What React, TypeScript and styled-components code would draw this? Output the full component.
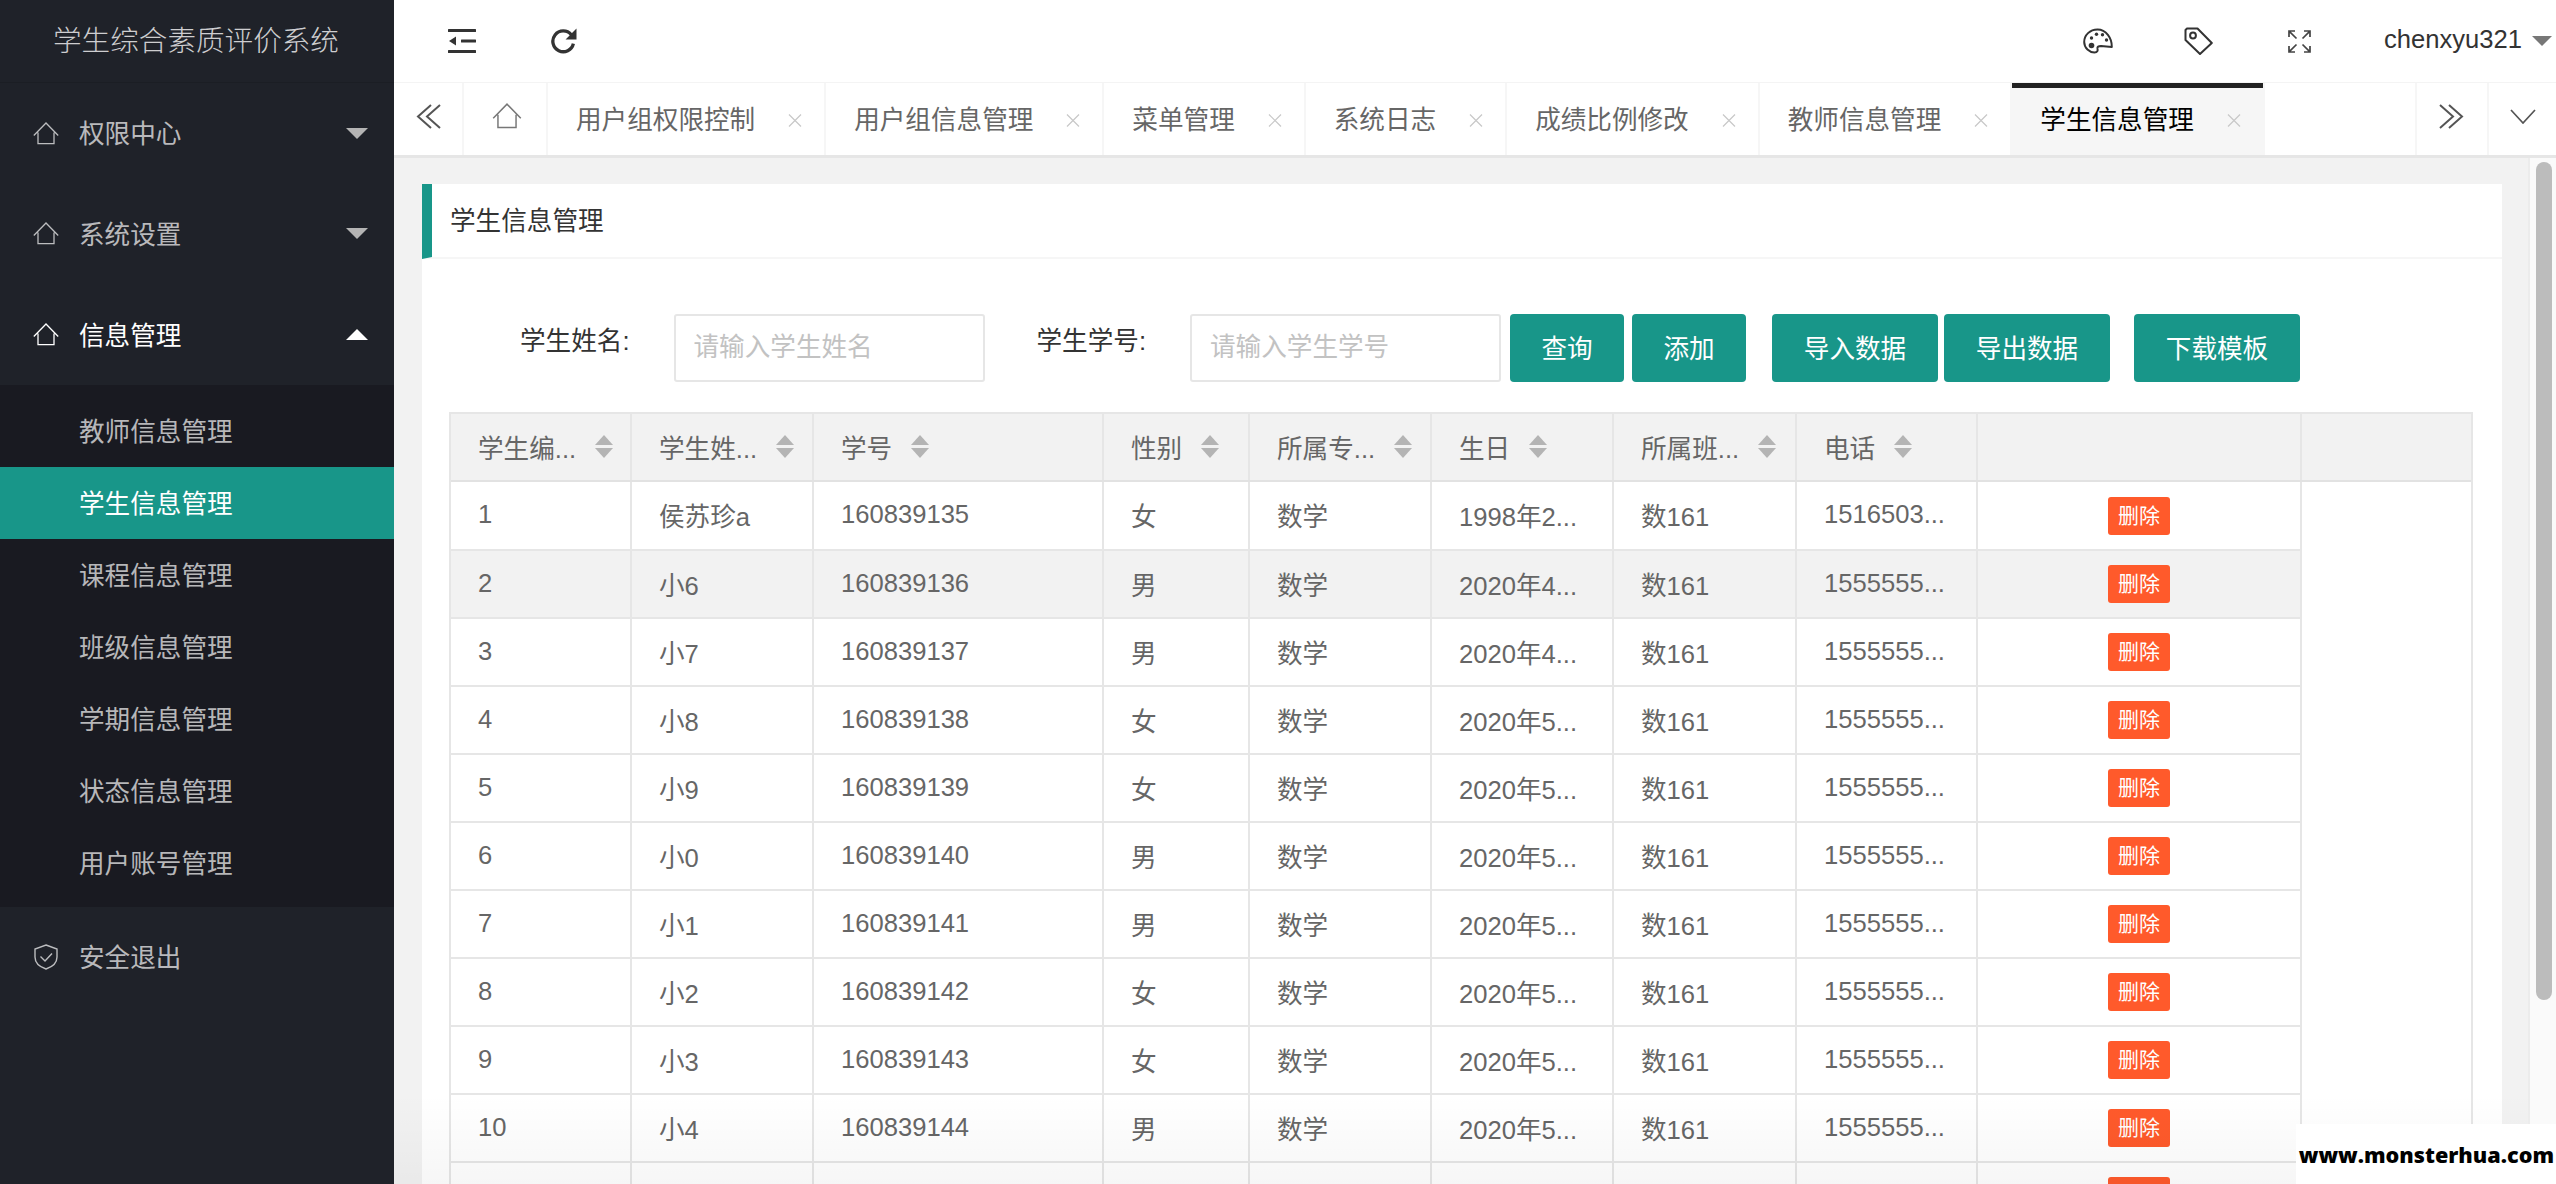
import React from "react";
import styled, { createGlobalStyle } from "styled-components";

const GlobalStyle = createGlobalStyle`
  html, body { margin: 0; padding: 0; height: 100%; overflow: hidden; }
  #root { height: 100%; }
  * { box-sizing: border-box; }
  body { font-family: "Liberation Sans", "Noto Sans CJK SC", sans-serif; font-size: 25.6px; color: #666; }
`;

const Page = styled.div`
  display: grid;
  grid-template-columns: 394px 1fr;
  height: 1184px;
  width: 2556px;
  overflow: hidden;
  position: relative;
`;

const Sidebar = styled.aside`
  background: #1f2229;
  display: flex;
  flex-direction: column;
  color: rgba(255, 255, 255, 0.7);
`;

const Logo = styled.div`
  height: 83px;
  display: flex;
  align-items: center;
  justify-content: center;
  font-size: 28.6px;
  font-weight: 300;
  color: rgba(255, 255, 255, 0.78);
  padding-bottom: 6px;
  padding-right: 2px;
  border-bottom: 1px solid #1b1e24;
`;

const NavItem = styled.div<{ $active?: boolean }>`
  height: 100.67px;
  display: flex;
  align-items: center;
  padding-left: 33px;
  padding-right: 26px;
  gap: 20px;
  color: ${(p) => (p.$active ? "#fff" : "rgba(255,255,255,0.7)")};
`;

const NavLabel = styled.span`
  flex: 1;
  margin-top: -3px;
`;

const Caret = styled.span<{ $up?: boolean; $color: string; $size: number; $height: number }>`
  width: 0;
  height: 0;
  border-left: ${(p) => p.$size}px solid transparent;
  border-right: ${(p) => p.$size}px solid transparent;
  ${(p) => (p.$up ? "border-bottom" : "border-top")}: ${(p) => p.$height}px solid ${(p) => p.$color};
`;

const SubMenu = styled.div`
  background: #191a21;
  padding: 10px 0 8px;
`;

const SubItem = styled.div<{ $active?: boolean }>`
  height: 72px;
  display: flex;
  align-items: center;
  padding-left: 79px;
  padding-bottom: 2px;
  background: ${(p) => (p.$active ? "#189689" : "transparent")};
  color: ${(p) => (p.$active ? "#fff" : "rgba(255,255,255,0.7)")};
`;

const Main = styled.main`
  display: flex;
  flex-direction: column;
  min-width: 0;
  background: #f2f2f2;
  position: relative;
  overflow: hidden;
`;

const TopBar = styled.header`
  height: 83px;
  background: #fff;
  display: flex;
  align-items: center;
  padding-right: 4px;
  border-bottom: 1px solid #f4f4f4;
  flex: none;
`;

const TopIcon = styled.span<{ $ml: number }>`
  display: flex;
  margin-left: ${(p) => p.$ml}px;
  color: #333;
`;

const Spacer = styled.div`
  flex: 1;
`;

const UserName = styled.span`
  margin-left: 73px;
  color: #333;
  font-size: 25.6px;
  margin-right: 10px;
  margin-top: -4px;
`;

const TabBar = styled.nav`
  height: 75px;
  flex: none;
  background: #fff;
  display: flex;
  border-bottom: 3px solid #e6e6e6;
`;

const TabEdge = styled.div<{ $w: number }>`
  width: ${(p) => p.$w}px;
  flex: none;
  display: flex;
  align-items: center;
  justify-content: center;
  border-right: 2px solid #f6f6f6;
  color: #666;
  padding-bottom: 6px;
`;

const TabHome = styled(TabEdge)`
  padding-left: 3px;
`;

const TabEdgeRight = styled(TabEdge)`
  border-right: none;
  border-left: 2px solid #f6f6f6;
`;

const TabStrip = styled.div`
  flex: 1;
  display: flex;
  min-width: 0;
`;

const Tab = styled.div<{ $active?: boolean }>`
  flex: none;
  display: flex;
  align-items: center;
  padding: 0 22px 4px 28px;
  gap: 33px;
  white-space: nowrap;
  border-right: 2px solid #f6f6f6;
  color: ${(p) => (p.$active ? "#000" : "#666")};
  background: ${(p) => (p.$active ? "#f6f6f6" : "transparent")};
  box-shadow: ${(p) => (p.$active ? "inset 0 5px 0 #222" : "none")};
  svg {
    margin-top: 6px;
  }
`;

const Content = styled.div`
  flex: 1;
  min-height: 0;
  overflow: hidden;
  padding: 26px 54px 0 28px;
  position: relative;
`;

const Card = styled.section`
  background: #fff;
`;

const CardHeader = styled.div`
  height: 75px;
  display: flex;
  align-items: center;
  padding-left: 18px;
  padding-bottom: 4px;
  border-left: 10px solid #189689;
  border-bottom: 2px solid #f6f6f6;
  color: #333;
`;

const CardBody = styled.div`
  padding: 55px 29px 0 27px;
`;

const Toolbar = styled.form`
  display: flex;
  align-items: flex-start;
  padding-left: 71px;
  height: 98px;
`;

const FieldLabel = styled.label<{ $mr: number }>`
  line-height: 54px;
  color: #333;
  margin-right: ${(p) => p.$mr}px;
  white-space: nowrap;
`;

const TextInput = styled.input<{ $mr: number }>`
  width: 311px;
  height: 68px;
  border: 2px solid #e6e6e6;
  border-radius: 3px;
  padding: 0 18px 2px;
  margin-right: ${(p) => p.$mr}px;
  font: inherit;
  outline: none;
  &::placeholder {
    color: #c2c2c2;
  }
`;

const ActionButton = styled.button<{ $ml?: number; $wide?: boolean }>`
  height: 68px;
  width: ${(p) => (p.$wide ? 166 : 114)}px;
  margin-left: ${(p) => p.$ml ?? 0}px;
  background: #189689;
  border: none;
  border-radius: 4px;
  color: #fff;
  font: inherit;
  padding: 0 0 4px;
`;

const TableBox = styled.div`
  border: solid #e6e6e6;
  border-width: 2px 2px 0 2px;
  width: 2024px;
`;

const HeadTable = styled.table`
  border-collapse: collapse;
  table-layout: fixed;
  width: 2020px;
  background: #f2f2f2;
`;

const BodyTable = styled.table`
  border-collapse: collapse;
  table-layout: fixed;
  width: 1850px;
`;

const HeadCell = styled.th`
  height: 67px;
  padding: 0 0 2px 27px;
  border-right: 2px solid #e6e6e6;
  border-bottom: 2px solid #e2e2e2;
  font-weight: 400;
  color: #666;
  text-align: left;
  white-space: nowrap;
  overflow: hidden;
  &:last-child {
    border-right: none;
  }
`;

const HeadInner = styled.div`
  display: flex;
  align-items: center;
  gap: 19px;
`;

const SortIcon = styled.span`
  display: inline-flex;
  flex-direction: column;
  gap: 3px;
  &::before,
  &::after {
    content: "";
    width: 0;
    height: 0;
    border-left: 9px solid transparent;
    border-right: 9px solid transparent;
  }
  &::before {
    border-bottom: 10px solid #b4b4b4;
  }
  &::after {
    border-top: 10px solid #b4b4b4;
  }
`;

const Row = styled.tr<{ $shade?: string }>`
  background: ${(p) => p.$shade ?? "#fff"};
`;

const Cell = styled.td`
  height: 68px;
  padding: 0 0 2px 27px;
  border-right: 2px solid #e6e6e6;
  border-bottom: 2px solid #e6e6e6;
  color: #666;
  white-space: nowrap;
  overflow: hidden;
`;

const ActionCell = styled(Cell)`
  padding: 0;
  text-align: center;
`;

const DeleteButton = styled.button`
  width: 62px;
  height: 38px;
  padding: 0;
  border: none;
  border-radius: 3px;
  background: #ff5a2b;
  color: #fff;
  font-family: inherit;
  font-size: 21px;
  line-height: 38px;
  vertical-align: middle;
`;

const Scrollbar = styled.div`
  position: absolute;
  top: 158px;
  right: 0;
  bottom: 0;
  width: 28px;
  background: #fafafa;
  border-left: 2px solid #ececec;
`;

const Thumb = styled.div`
  position: absolute;
  top: 4px;
  left: 6px;
  width: 16px;
  height: 838px;
  border-radius: 8px;
  background: #bcbcbc;
`;

const BottomFade = styled.div`
  position: absolute;
  left: 0;
  right: 0;
  bottom: 0;
  height: 90px;
  pointer-events: none;
  background: linear-gradient(to bottom, rgba(0, 0, 0, 0), rgba(0, 0, 0, 0.035));
`;

const Watermark = styled.div`
  position: absolute;
  right: 0;
  bottom: 0;
  width: 260px;
  height: 60px;
  background: #fff;
  color: #000;
  font-family: "Open Sans", "Noto Sans", sans-serif;
  font-weight: 800;
  font-size: 21.6px;
  display: flex;
  align-items: center;
  justify-content: flex-end;
  padding-right: 2px;
  white-space: nowrap;
`;

const HomeIcon = ({ w = 26, h = 23, c = "currentColor" }: { w?: number; h?: number; c?: string }) => (
  <svg width={w} height={h} viewBox="0 0 26 23" fill="none" stroke={c} strokeWidth="1.3">
    <path d="M0.8 13.5 13 1 25.2 13.5M5 10.5V21.7H21V10.5" />
  </svg>
);

const ShieldIcon = () => (
  <svg width="26" height="26" viewBox="0 0 26 26" fill="none" stroke="currentColor" strokeWidth="1.4">
    <path d="M13 1 24 5V13C24 19 19 23 13 25 7 23 2 19 2 13V5Z" />
    <path d="M7.5 12.5 12 17 19 9.5" />
  </svg>
);

const CloseIcon = () => (
  <svg width="14" height="13" viewBox="0 0 14 13" fill="none" stroke="#c8c8c8" strokeWidth="1.2">
    <path d="M1 0.5 13 12.5M13 0.5 1 12.5" />
  </svg>
);

const DoubleLeft = () => (
  <svg width="26" height="25" viewBox="0 0 26 25" fill="none" stroke="#555" strokeWidth="2">
    <path d="M16 1 3 12.5 16 24M25 1 12 12.5 25 24" />
  </svg>
);

const DoubleRight = () => (
  <svg width="26" height="25" viewBox="0 0 26 25" fill="none" stroke="#555" strokeWidth="2">
    <path d="M1 1 14 12.5 1 24M10 1 23 12.5 10 24" />
  </svg>
);

const ChevronDown = () => (
  <svg width="26" height="15" viewBox="0 0 26 15" fill="none" stroke="#555" strokeWidth="1.7">
    <path d="M1 1 13 14 25 1" />
  </svg>
);

const OutdentIcon = () => (
  <svg width="28" height="24" viewBox="0 0 28 24" fill="#333">
    <rect x="0" y="0" width="28" height="3" rx="0.5" />
    <rect x="0" y="21" width="28" height="3" rx="0.5" />
    <rect x="13" y="10.5" width="15" height="3" rx="0.5" />
    <path d="M1 12 8 7.5V16.5Z" />
  </svg>
);

const RefreshIcon = () => (
  <svg width="27" height="26" viewBox="0 0 26 25" fill="none">
    <path d="M20.5 6.5A10 10 0 1 0 22.5 15" stroke="#333" strokeWidth="3.2" />
    <path d="M25.5 0.5V11H15Z" fill="#333" />
  </svg>
);

const PaletteIcon = () => (
  <svg width="30" height="26" viewBox="0 0 30 26" fill="none" stroke="#333" strokeWidth="2">
    <path d="M14.5 1.5C7 1.5 1.2 7 1.2 14 1.2 20 6.5 24.5 11.5 24.5 14.5 24.5 15 22.5 14.5 20.8 14 18.8 15.5 18 18 18L28.8 19C29 10 23 1.5 14.5 1.5Z" strokeLinejoin="round" />
    <g fill="#333" stroke="none">
      <circle cx="8.5" cy="10" r="1.7" />
      <circle cx="13.5" cy="6.2" r="1.7" />
      <circle cx="19.5" cy="6.8" r="1.7" />
      <circle cx="23.5" cy="12" r="1.7" />
      <circle cx="8.5" cy="17.5" r="2.8" />
    </g>
  </svg>
);

const TagIcon = () => (
  <svg width="29" height="28" viewBox="0 0 29 28" fill="none" stroke="#333" strokeWidth="2" strokeLinejoin="round">
    <path d="M3 1.5 13.5 1.5 27.8 16 16 27 1.5 13 1.5 3Z" />
    <circle cx="9" cy="8.5" r="2.9" />
  </svg>
);

const FullscreenIcon = () => (
  <svg width="23" height="23" viewBox="0 0 23 23" fill="none" stroke="#444" strokeWidth="1.7">
    <path d="M1 7V1H7M1.3 1.3 8.5 8.5" />
    <path d="M22 7V1H16M21.7 1.3 14.5 8.5" />
    <path d="M1 16V22H7M1.3 21.7 8.5 14.5" />
    <path d="M22 16V22H16M21.7 21.7 14.5 14.5" />
  </svg>
);

const subItems = ["教师信息管理", "学生信息管理", "课程信息管理", "班级信息管理", "学期信息管理", "状态信息管理", "用户账号管理"];
const tabs = ["用户组权限控制", "用户组信息管理", "菜单管理", "系统日志", "成绩比例修改", "教师信息管理", "学生信息管理"];
const colWidths = [180, 182, 290, 146, 182, 182, 183, 181, 324, 170];
const headers: [string, boolean][] = [
  ["学生编...", true],
  ["学生姓...", true],
  ["学号", true],
  ["性别", true],
  ["所属专...", true],
  ["生日", true],
  ["所属班...", true],
  ["电话", true],
  ["", false],
  ["", false],
];

const rows: string[][] = [
  ["1", "侯苏珍a", "160839135", "女", "1998年2...", "1516503..."],
  ["2", "小6", "160839136", "男", "2020年4...", "1555555..."],
  ["3", "小7", "160839137", "男", "2020年4...", "1555555..."],
  ["4", "小8", "160839138", "女", "2020年5...", "1555555..."],
  ["5", "小9", "160839139", "女", "2020年5...", "1555555..."],
  ["6", "小0", "160839140", "男", "2020年5...", "1555555..."],
  ["7", "小1", "160839141", "男", "2020年5...", "1555555..."],
  ["8", "小2", "160839142", "女", "2020年5...", "1555555..."],
  ["9", "小3", "160839143", "女", "2020年5...", "1555555..."],
  ["10", "小4", "160839144", "男", "2020年5...", "1555555..."],
  ["11", "小5", "160839145", "女", "2020年5...", "1555555..."],
];

const ColGroup = ({ widths }: { widths: number[] }) => (
  <colgroup>
    {widths.map((w, i) => (
      <col key={i} width={w} />
    ))}
  </colgroup>
);

export default function App() {
  return (
    <>
      <GlobalStyle />
      <Page>
        <Sidebar>
          <Logo>学生综合素质评价系统</Logo>
          <NavItem>
            <HomeIcon />
            <NavLabel>权限中心</NavLabel>
            <Caret $color="#b4b4b4" $size={11} $height={11} />
          </NavItem>
          <NavItem>
            <HomeIcon />
            <NavLabel>系统设置</NavLabel>
            <Caret $color="#b4b4b4" $size={11} $height={11} />
          </NavItem>
          <NavItem $active>
            <HomeIcon />
            <NavLabel>信息管理</NavLabel>
            <Caret $up $color="#fff" $size={11} $height={11} />
          </NavItem>
          <SubMenu>
            {subItems.map((s, i) => (
              <SubItem key={s} $active={i === 1}>
                {s}
              </SubItem>
            ))}
          </SubMenu>
          <NavItem>
            <ShieldIcon />
            <NavLabel>安全退出</NavLabel>
          </NavItem>
        </Sidebar>
        <Main>
          <TopBar>
            <TopIcon $ml={54}>
              <OutdentIcon />
            </TopIcon>
            <TopIcon $ml={74}>
              <RefreshIcon />
            </TopIcon>
            <Spacer />
            <TopIcon $ml={0}>
              <PaletteIcon />
            </TopIcon>
            <TopIcon $ml={71}>
              <TagIcon />
            </TopIcon>
            <TopIcon $ml={75}>
              <FullscreenIcon />
            </TopIcon>
            <UserName>chenxyu321</UserName>
            <Caret $color="#777" $size={10} $height={10} />
          </TopBar>
          <TabBar>
            <TabEdge $w={70}>
              <DoubleLeft />
            </TabEdge>
            <TabHome $w={84}>
              <HomeIcon w={30} h={26} c="#777" />
            </TabHome>
            <TabStrip>
              {tabs.map((t, i) => (
                <Tab key={t} $active={i === tabs.length - 1}>
                  {t}
                  <CloseIcon />
                </Tab>
              ))}
            </TabStrip>
            <TabEdgeRight $w={72}>
              <DoubleRight />
            </TabEdgeRight>
            <TabEdgeRight $w={69}>
              <ChevronDown />
            </TabEdgeRight>
          </TabBar>
          <Content>
            <Card>
              <CardHeader>学生信息管理</CardHeader>
              <CardBody>
                <Toolbar>
                  <FieldLabel $mr={44}>学生姓名:</FieldLabel>
                  <TextInput $mr={52} placeholder="请输入学生姓名" />
                  <FieldLabel $mr={44}>学生学号:</FieldLabel>
                  <TextInput $mr={9} placeholder="请输入学生学号" />
                  <ActionButton type="button">查询</ActionButton>
                  <ActionButton type="button" $ml={8}>添加</ActionButton>
                  <ActionButton type="button" $wide $ml={26}>导入数据</ActionButton>
                  <ActionButton type="button" $wide $ml={6}>导出数据</ActionButton>
                  <ActionButton type="button" $wide $ml={24}>下载模板</ActionButton>
                </Toolbar>
                <TableBox>
                  <HeadTable>
                    <ColGroup widths={colWidths} />
                    <thead>
                      <tr>
                        {headers.map(([h, sort], i) => (
                          <HeadCell key={i}>
                            <HeadInner>
                              {h}
                              {sort && <SortIcon />}
                            </HeadInner>
                          </HeadCell>
                        ))}
                      </tr>
                    </thead>
                  </HeadTable>
                  <BodyTable>
                    <ColGroup widths={colWidths.slice(0, 9)} />
                    <tbody>
                      {rows.map((r, i) => (
                        <Row key={r[0]} $shade={i === 1 ? "#f2f2f2" : undefined}>
                          <Cell>{r[0]}</Cell>
                          <Cell>{r[1]}</Cell>
                          <Cell>{r[2]}</Cell>
                          <Cell>{r[3]}</Cell>
                          <Cell>数学</Cell>
                          <Cell>{r[4]}</Cell>
                          <Cell>数161</Cell>
                          <Cell>{r[5]}</Cell>
                          <ActionCell>
                            <DeleteButton type="button">删除</DeleteButton>
                          </ActionCell>
                        </Row>
                      ))}
                    </tbody>
                  </BodyTable>
                </TableBox>
              </CardBody>
            </Card>
            <BottomFade />
          </Content>
          <Scrollbar>
            <Thumb />
          </Scrollbar>
          <Watermark>www.monsterhua.com</Watermark>
        </Main>
      </Page>
    </>
  );
}
